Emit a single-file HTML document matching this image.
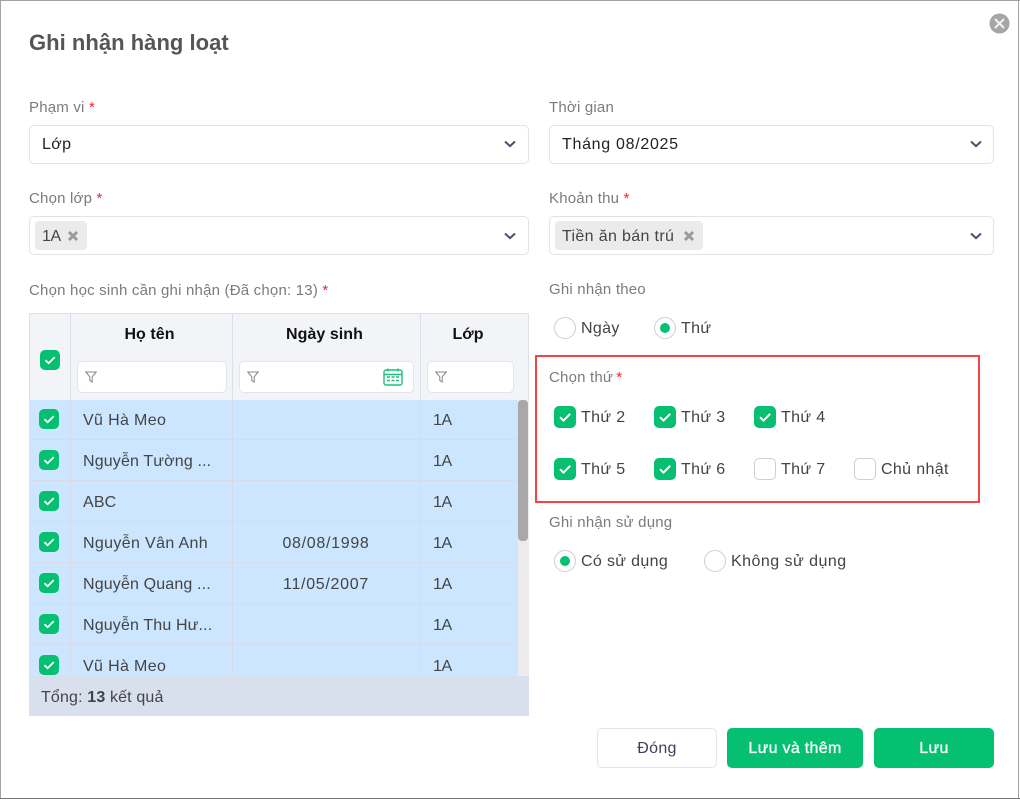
<!DOCTYPE html>
<html lang="vi"><head><meta charset="utf-8"><title>Ghi nhận hàng loạt</title>
<style>
*{box-sizing:border-box}
html,body{margin:0;padding:0;width:1020px;height:800px;overflow:hidden;background:#fff}
body{font-family:"Liberation Sans","DejaVu Sans",sans-serif;position:relative;color:#444}
.a{position:absolute}
.t{position:absolute;white-space:nowrap;line-height:20px;font-size:16px;letter-spacing:.35px;margin-top:1px}
.lb{color:#7b7b7b;font-size:15px;letter-spacing:.2px}
.d{letter-spacing:.7px}
.e{letter-spacing:.15px}
.n{letter-spacing:-.4px}
.r{color:#f5222d}
.sel{position:absolute;height:39px;background:#fff;border:1px solid #e3e3e6;border-radius:5px}
.chev{position:absolute;width:12px;height:8px}
.tag{position:absolute;height:29px;background:#ebebeb;border-radius:4px}
.cb{position:absolute;width:22px;height:22px;border-radius:5px;background:#05c071}
.cb svg{position:absolute;left:0;top:0}
.cb.off{background:#fff;border:1px solid #cfcfcf}
.rd{position:absolute;width:22px;height:22px;border-radius:50%;background:#fff;border:1px solid #cfcfcf}
.rd.on::after{content:"";position:absolute;left:5px;top:5px;width:10px;height:10px;border-radius:50%;background:#05c071}
.hl{position:absolute;background:#dcdfea}
.fi{position:absolute;height:32px;top:361px;background:#fff;border:1px solid #e4e5ea;border-radius:5px}
.th{position:absolute;white-space:nowrap;text-align:center;font-weight:700;font-size:16px;line-height:20px;color:#111;letter-spacing:.05px;top:325px}
.btn{position:absolute;top:728px;height:40px;border-radius:5px;text-align:center;line-height:41px;font-size:16px;letter-spacing:.3px;white-space:nowrap}
.g{background:#05c071;color:#fff;-webkit-text-stroke:.35px #fff}
</style></head><body>
<svg width="0" height="0" style="position:absolute"><defs>
<symbol id="ck" viewBox="0 0 22 22"><path d="M6 11.2l3.5 3.4L16.2 7.8" fill="none" stroke="#fff" stroke-width="2"/></symbol>
<symbol id="ch" viewBox="0 0 12 8"><path d="M1 1.5l5 4.6 5-4.6" fill="none" stroke="#4b4f6b" stroke-width="2"/></symbol>
<symbol id="fl" viewBox="0 0 12 12"><path d="M.8 1h10.4L7.2 5.8v5.2L4.8 9.6V5.8z" fill="none" stroke="#85858f" stroke-width="1"/></symbol>
<symbol id="xx" viewBox="0 0 12 12"><path d="M2 2l8 8M10 2l-8 8" fill="none" stroke="#9a9a9a" stroke-width="3"/></symbol>
</defs></svg>

<!-- modal edges -->
<div class="a" style="left:0;top:0;width:1020px;height:1px;background:#a3a3a3"></div>
<div class="a" style="left:0;top:0;width:1px;height:799px;background:#a3a3a3"></div>
<div class="a" style="left:1018px;top:0;width:1px;height:799px;background:#a3a3a3"></div>
<div class="a" style="left:0;top:798px;width:1020px;height:1px;background:#777"></div>

<div class="t" style="left:29px;top:30px;font-size:22px;line-height:24px;font-weight:700;color:#555;letter-spacing:.03px">Ghi nhận hàng loạt</div>
<svg class="a" style="left:989px;top:13px" width="21" height="21" viewBox="0 0 21 21"><circle cx="10.5" cy="10.5" r="10" fill="#a6a6a6"/><path d="M6 6l9 9M15 6l-9 9" stroke="#f2f2f2" stroke-width="2"/></svg>

<!-- left col fields -->
<div class="t lb" style="left:29px;top:97px">Phạm vi <span class="r">*</span></div>
<div class="sel" style="left:29px;top:125px;width:500px"></div>
<div class="t" style="left:42px;top:134px;color:#222">Lớp</div>
<svg class="chev" style="left:504px;top:140px"><use href="#ch"/></svg>

<div class="t lb" style="left:29px;top:188px">Chọn lớp <span class="r">*</span></div>
<div class="sel" style="left:29px;top:216px;width:500px"></div>
<div class="tag" style="left:35px;top:221px;width:52px"></div>
<div class="t n" style="left:42px;top:226px">1A</div>
<svg class="a" style="left:67px;top:230px" width="12" height="12"><use href="#xx"/></svg>
<svg class="chev" style="left:504px;top:232px"><use href="#ch"/></svg>

<!-- right col fields -->
<div class="t lb" style="left:549px;top:97px">Thời gian</div>
<div class="sel" style="left:549px;top:125px;width:445px"></div>
<div class="t d" style="left:562px;top:134px;color:#222">Tháng 08/2025</div>
<svg class="chev" style="left:970px;top:140px"><use href="#ch"/></svg>

<div class="t lb" style="left:549px;top:188px">Khoản thu <span class="r">*</span></div>
<div class="sel" style="left:549px;top:216px;width:445px"></div>
<div class="tag" style="left:555px;top:221px;width:148px"></div>
<div class="t" style="left:562px;top:226px">Tiền ăn bán trú</div>
<svg class="a" style="left:683px;top:230px" width="12" height="12"><use href="#xx"/></svg>
<svg class="chev" style="left:970px;top:232px"><use href="#ch"/></svg>

<!-- table -->
<div class="t lb" style="left:29px;top:280px">Chọn học sinh cần ghi nhận (Đã chọn: 13)<span class="r"> *</span></div>
<div class="a" style="left:29px;top:313px;width:500px;height:87px;background:#f3f4f8;border:1px solid #e0e2ea;border-bottom:0"></div>
<div class="hl" style="left:70px;top:314px;width:1px;height:86px"></div>
<div class="hl" style="left:232px;top:314px;width:1px;height:86px"></div>
<div class="hl" style="left:420px;top:314px;width:1px;height:86px"></div>
<div class="th" style="left:69px;width:161px">Họ tên</div>
<div class="th" style="left:231px;width:187px">Ngày sinh</div>
<div class="th" style="left:419px;width:98px">Lớp</div>
<div class="cb" style="left:40px;top:350px;width:20px;height:20px"><svg width="20" height="20"><use href="#ck"/></svg></div>
<div class="fi" style="left:77px;width:150px"></div>
<div class="fi" style="left:239px;width:175px"></div>
<div class="fi" style="left:427px;width:87px"></div>
<svg class="a" style="left:85px;top:371px" width="12" height="12"><use href="#fl"/></svg>
<svg class="a" style="left:247px;top:371px" width="12" height="12"><use href="#fl"/></svg>
<svg class="a" style="left:435px;top:371px" width="12" height="12"><use href="#fl"/></svg>
<svg class="a" style="left:383px;top:368px" width="20" height="18" viewBox="0 0 20 18"><rect x="1" y="2" width="18" height="15" rx="2" fill="none" stroke="#1fbf7a" stroke-width="1.4"/><path d="M1 6.5h18M5 .5v3M15 .5v3" stroke="#1fbf7a" stroke-width="1.4" fill="none"/><path d="M4 9h3M8.5 9h3M13 9h3M4 12.5h3M8.5 12.5h3M13 12.5h3" stroke="#1fbf7a" stroke-width="1.6" fill="none"/></svg>

<div class="a" style="left:29px;top:400px;width:489px;height:276px;background:#cbe6fe"></div>
<div class="a" style="left:518px;top:400px;width:11px;height:276px;background:#ececec"></div>
<div class="a" style="left:518px;top:400px;width:10px;height:141px;background:#a8a8a8;border-radius:4px"></div>
<div class="hl" style="left:70px;top:400px;width:1px;height:276px;background:#d6dbe8"></div>
<div class="hl" style="left:232px;top:400px;width:1px;height:276px;background:#d6dbe8"></div>
<div class="hl" style="left:419px;top:400px;width:1px;height:276px;background:#d6dbe8"></div>
<div class="hl" style="left:29px;top:439px;width:489px;height:1px;background:#d9dbe8"></div>
<div class="hl" style="left:29px;top:480px;width:489px;height:1px;background:#d9dbe8"></div>
<div class="hl" style="left:29px;top:521px;width:489px;height:1px;background:#d9dbe8"></div>
<div class="hl" style="left:29px;top:562px;width:489px;height:1px;background:#d9dbe8"></div>
<div class="hl" style="left:29px;top:603px;width:489px;height:1px;background:#d9dbe8"></div>
<div class="hl" style="left:29px;top:644px;width:489px;height:1px;background:#d9dbe8"></div>

<div class="cb" style="left:39px;top:409px;width:20px;height:20px"><svg width="20" height="20"><use href="#ck"/></svg></div>
<div class="cb" style="left:39px;top:450px;width:20px;height:20px"><svg width="20" height="20"><use href="#ck"/></svg></div>
<div class="cb" style="left:39px;top:491px;width:20px;height:20px"><svg width="20" height="20"><use href="#ck"/></svg></div>
<div class="cb" style="left:39px;top:532px;width:20px;height:20px"><svg width="20" height="20"><use href="#ck"/></svg></div>
<div class="cb" style="left:39px;top:573px;width:20px;height:20px"><svg width="20" height="20"><use href="#ck"/></svg></div>
<div class="cb" style="left:39px;top:614px;width:20px;height:20px"><svg width="20" height="20"><use href="#ck"/></svg></div>
<div class="cb" style="left:39px;top:655px;width:20px;height:20px"><svg width="20" height="20"><use href="#ck"/></svg></div>

<div class="t" style="left:83px;top:410px">Vũ Hà Meo</div>
<div class="t e" style="left:83px;top:451px">Nguyễn Tường ...</div>
<div class="t e" style="left:83px;top:492px">ABC</div>
<div class="t" style="left:83px;top:533px">Nguyễn Vân Anh</div>
<div class="t e" style="left:83px;top:574px">Nguyễn Quang ...</div>
<div class="t e" style="left:83px;top:615px">Nguyễn Thu Hư...</div>
<div class="t" style="left:83px;top:656px">Vũ Hà Meo</div>
<div class="t d" style="left:233px;width:186px;text-align:center;top:533px">08/08/1998</div>
<div class="t d" style="left:233px;width:186px;text-align:center;top:574px">11/05/2007</div>
<div class="t n" style="left:433px;top:410px">1A</div>
<div class="t n" style="left:433px;top:451px">1A</div>
<div class="t n" style="left:433px;top:492px">1A</div>
<div class="t n" style="left:433px;top:533px">1A</div>
<div class="t n" style="left:433px;top:574px">1A</div>
<div class="t n" style="left:433px;top:615px">1A</div>
<div class="t n" style="left:433px;top:656px">1A</div>

<div class="a" style="left:29px;top:676px;width:500px;height:40px;background:#d9e0ed"></div>
<div class="t e" style="left:41px;top:687px">Tổng: <b>13</b> kết quả</div>

<!-- right options -->
<div class="t lb" style="left:549px;top:279px">Ghi nhận theo</div>
<div class="rd" style="left:554px;top:317px"></div>
<div class="t" style="left:581px;top:318px">Ngày</div>
<div class="rd on" style="left:654px;top:317px"></div>
<div class="t" style="left:681px;top:318px">Thứ</div>

<div class="a" style="left:535px;top:355px;width:445px;height:148px;border:2px solid #f44444"></div>
<div class="t lb" style="left:549px;top:367px">Chọn thứ<span class="r" style="margin-left:3px">*</span></div>

<div class="cb" style="left:554px;top:406px"><svg width="22" height="22"><use href="#ck"/></svg></div>
<div class="t" style="left:581px;top:407px">Thứ 2</div>
<div class="cb" style="left:654px;top:406px"><svg width="22" height="22"><use href="#ck"/></svg></div>
<div class="t" style="left:681px;top:407px">Thứ 3</div>
<div class="cb" style="left:754px;top:406px"><svg width="22" height="22"><use href="#ck"/></svg></div>
<div class="t" style="left:781px;top:407px">Thứ 4</div>
<div class="cb" style="left:554px;top:458px"><svg width="22" height="22"><use href="#ck"/></svg></div>
<div class="t" style="left:581px;top:459px">Thứ 5</div>
<div class="cb" style="left:654px;top:458px"><svg width="22" height="22"><use href="#ck"/></svg></div>
<div class="t" style="left:681px;top:459px">Thứ 6</div>
<div class="cb off" style="left:754px;top:458px"></div>
<div class="t" style="left:781px;top:459px">Thứ 7</div>
<div class="cb off" style="left:854px;top:458px"></div>
<div class="t" style="left:881px;top:459px">Chủ nhật</div>

<div class="t lb" style="left:549px;top:512px">Ghi nhận sử dụng</div>
<div class="rd on" style="left:554px;top:550px"></div>
<div class="t" style="left:581px;top:551px">Có sử dụng</div>
<div class="rd" style="left:704px;top:550px"></div>
<div class="t" style="left:731px;top:551px;letter-spacing:.47px">Không sử dụng</div>

<!-- buttons -->
<div class="btn" style="left:597px;width:120px;background:#fff;border:1px solid #e3e3e8;color:#3f3f5c;line-height:39px">Đóng</div>
<div class="btn g" style="left:727px;width:136px">Lưu và thêm</div>
<div class="btn g" style="left:874px;width:120px">Lưu</div>
</body></html>
